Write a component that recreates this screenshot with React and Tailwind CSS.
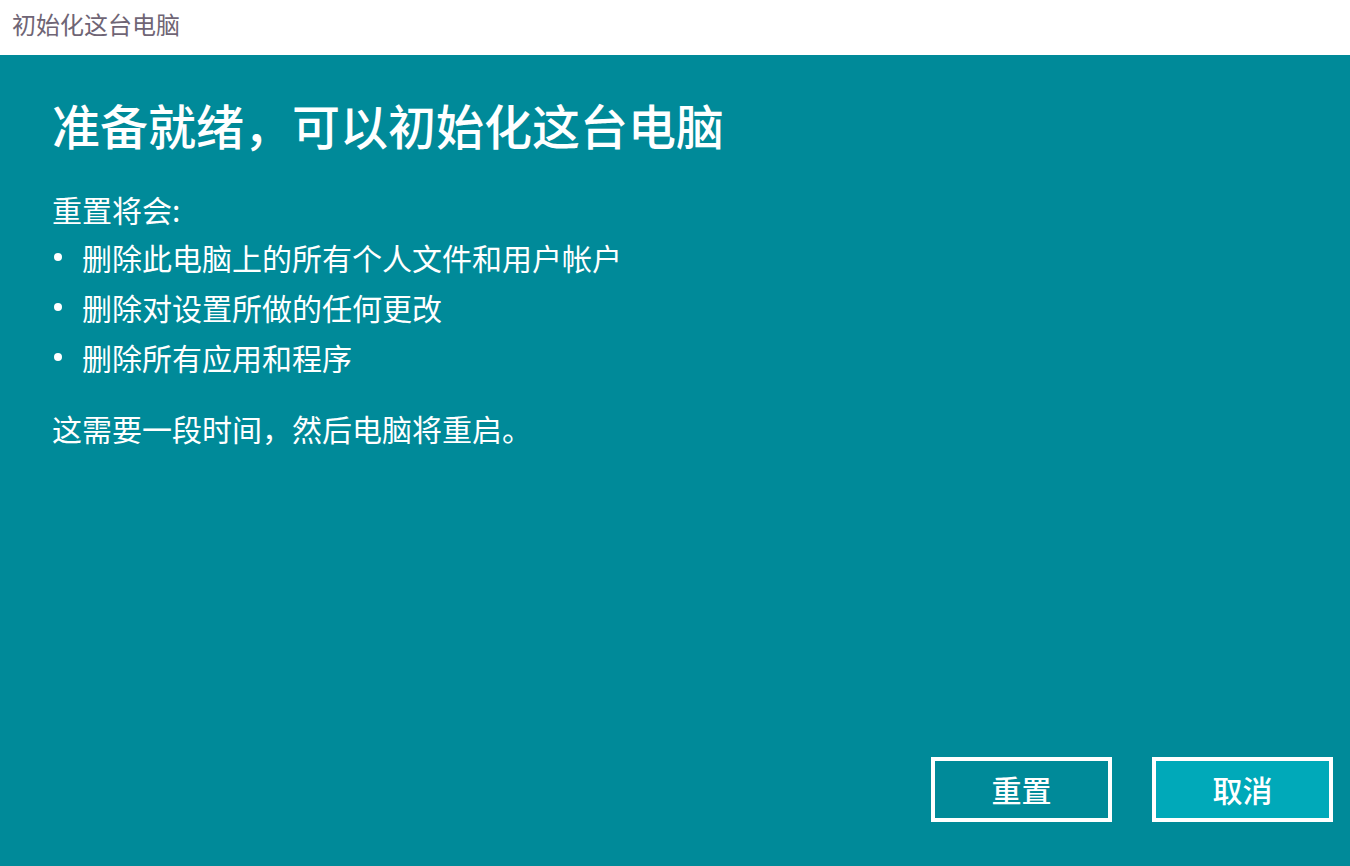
import React from 'react'

const items = [
  '删除此电脑上的所有个人文件和用户帐户',
  '删除对设置所做的任何更改',
  '删除所有应用和程序',
]

export default function App() {
  return (
    <div
      className="flex h-[866px] w-[1350px] flex-col overflow-hidden bg-[#008a99]"
      style={{ fontFamily: '"Noto Sans CJK SC", "Noto Sans", sans-serif' }}
    >
      <div className="h-[55px] shrink-0 bg-white pl-[12px] pt-[8px] text-[24px] leading-[32px] text-[#6f6575]">
        初始化这台电脑
      </div>

      <div className="flex flex-1 flex-col px-[52px] pt-[39px] text-white">
        <h1 className="text-[48px] font-medium leading-[60px]">准备就绪，可以初始化这台电脑</h1>

        <p className="mt-[35px] text-[30px] leading-[40px]">重置将会:</p>
        <ul className="mt-[3px]">
          {items.map((t) => (
            <li key={t} className="flex h-[50px] items-center text-[30px]">
              <span className="ml-[2px] mr-[20px] h-[8px] w-[8px] rounded-full bg-white" />
              <span>{t}</span>
            </li>
          ))}
        </ul>
        <p className="mt-[26px] text-[30px] leading-[40px]">这需要一段时间，然后电脑将重启。</p>

        <div className="mt-auto mb-[44px] mr-[-35px] flex justify-end gap-[40px]">
          <button className="flex h-[65px] w-[181px] items-center justify-center border-[4px] border-white bg-[#008a99] text-[30px] font-medium text-white">
            重置
          </button>
          <button className="flex h-[65px] w-[181px] items-center justify-center border-[4px] border-white bg-[#00a9b9] text-[30px] font-medium text-white">
            取消
          </button>
        </div>
      </div>
    </div>
  )
}
